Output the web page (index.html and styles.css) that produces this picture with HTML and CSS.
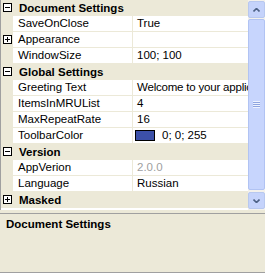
FILE: index.html
```html
<!DOCTYPE html>
<html>
<head>
<meta charset="utf-8">
<link rel="stylesheet" href="styles.css">
</head>
<body>
<div class="pg">
  <div class="grid">
    <div class="rows">
      <div class="row cat"><span class="margin"><span class="box minus"></span></span><span class="cname">Document Settings</span></div>
      <div class="row"><span class="margin"></span><span class="name">SaveOnClose</span><span class="val">True</span></div>
      <div class="row"><span class="margin"><span class="box plus"></span></span><span class="name">Appearance</span><span class="val"></span></div>
      <div class="row"><span class="margin"></span><span class="name">WindowSize</span><span class="val">100; 100</span></div>
      <div class="row cat"><span class="margin"><span class="box minus"></span></span><span class="cname">Global Settings</span></div>
      <div class="row"><span class="margin"></span><span class="name">Greeting Text</span><span class="val narrow">Welcome to your application!</span></div>
      <div class="row"><span class="margin"></span><span class="name">ItemsInMRUList</span><span class="val">4</span></div>
      <div class="row"><span class="margin"></span><span class="name">MaxRepeatRate</span><span class="val">16</span></div>
      <div class="row"><span class="margin"></span><span class="name">ToolbarColor</span><span class="val"><span class="swatch"></span>0; 0; 255</span></div>
      <div class="row cat"><span class="margin"><span class="box minus"></span></span><span class="cname">Version</span></div>
      <div class="row"><span class="margin"></span><span class="name">AppVerion</span><span class="val ro">2.0.0</span></div>
      <div class="row"><span class="margin"></span><span class="name">Language</span><span class="val">Russian</span></div>
      <div class="row cat"><span class="margin"><span class="box plus"></span></span><span class="cname">Masked</span></div>
    </div>
    <div class="sb">
      <div class="sbtn"><svg width="7" height="4" viewBox="0 0 7 4"><path d="M0.5 3.5 L3.5 0.5 L6.5 3.5" fill="none" stroke="#4d6185" stroke-width="1.6"/></svg></div>
      <div class="track"><div class="thumb"><span class="grip"></span></div></div>
      <div class="sbtn"><svg width="7" height="4" viewBox="0 0 7 4"><path d="M0.5 0.5 L3.5 3.5 L6.5 0.5" fill="none" stroke="#4d6185" stroke-width="1.6"/></svg></div>
    </div>
  </div>
  <div class="desc"><div class="dtitle">Document Settings</div></div>
</div>
</body>
</html>
```
FILE: styles.css
```css
html, body { margin: 0; padding: 0; background: #ece9d8; }
.pg {
  width: 265px; height: 273px;
  font-family: "Liberation Sans", Arial, sans-serif;
  font-size: 11.5px; color: #000;
  display: flex; flex-direction: column;
}
.grid {
  height: 210px; display: flex; background: #fff;
  border-left: 1px solid #a0a0a0;
}
.rows { flex: 1; overflow: hidden; }
.row {
  height: 15px; border-bottom: 1px solid #ece9d8;
  display: flex; align-items: center; white-space: nowrap;
}
.margin {
  width: 12px; height: 16px; background: #ece9d8; flex: none;
  display: flex; align-items: center; justify-content: center;
}
.box {
  width: 7px; height: 7px; border: 1px solid #000; background: #fff; position: relative;
}
.box::before { content: ""; position: absolute; left: 1px; top: 3px; width: 5px; height: 1px; background: #000; }
.plus::after { content: ""; position: absolute; left: 3px; top: 1px; width: 1px; height: 5px; background: #000; }
.name {
  width: 114px; padding-left: 5px; flex: none; height: 15px; line-height: 15px;
  border-right: 1px solid #ece9d8; overflow: hidden;
}
.val { flex: 1; padding-left: 4px; height: 15px; line-height: 15px; overflow: hidden; display: flex; align-items: center; }
.narrow { letter-spacing: -0.2px; }
.ro { color: #a0a0a0; }
.cat { background: #ece9d8; }
.cname { font-weight: bold; padding-left: 6px; }
.swatch { width: 18px; height: 9px; border: 1px solid #000; background: #3c50a8; margin-right: 7px; margin-left: -2px; }
.sb { width: 17px; flex: none; display: flex; flex-direction: column; background: #f3f1ec; }
.sbtn {
  height: 15px; margin: 1px 0; border: 1px solid #b8c8ef; border-radius: 2px;
  background: #c5d3fb; display: flex; align-items: center; justify-content: center;
}
.track { flex: 1; display: flex; flex-direction: column; padding: 0; }
.thumb {
  flex: 1; border: 1px solid #b1c3f3; border-radius: 2px; background: #c7d5fd;
  display: flex; align-items: center; justify-content: center; margin-bottom: 1px;
}
.grip { width: 7px; height: 7px; background: repeating-linear-gradient(#eef3ff 0 1px, #8ea5e0 1px 2px); }
.desc {
  flex: 1; margin-top: 3px; border-top: 1px solid #a0a0a0; border-bottom: 1px solid #a0a0a0;
  padding: 4px 6px;
}
.dtitle { font-weight: bold; }
```
